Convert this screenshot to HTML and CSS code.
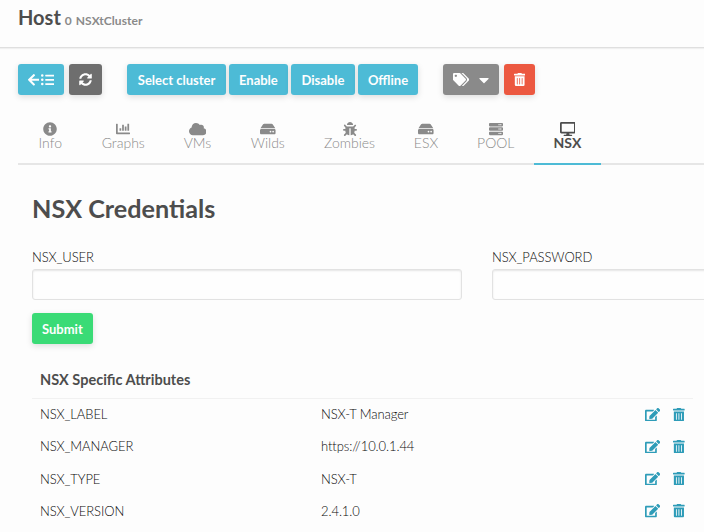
FILE: index.html
```html
<!DOCTYPE html>
<html lang="en">
<head>
<meta charset="utf-8">
<title>Host</title>
<link rel="stylesheet" href="styles.css">
</head>
<body>
<svg class="sprite" aria-hidden="true">
  <symbol id="arrow" viewBox="0 0 448 512"><path d="M257.5 445.1l-22.2 22.2c-9.4 9.4-24.6 9.4-33.9 0L7 273c-9.4-9.4-9.4-24.6 0-33.9L201.4 44.7c9.4-9.4 24.6-9.4 33.9 0l22.2 22.2c9.5 9.5 9.3 25-.4 34.3L136.6 216H424c13.3 0 24 10.7 24 24v32c0 13.3-10.7 24-24 24H136.6l120.5 114.8c9.8 9.3 10 24.8.4 34.3z"/></symbol>
  <symbol id="list" viewBox="0 0 512 512"><path d="M48 48a48 48 0 1 0 48 48 48 48 0 0 0-48-48zm0 160a48 48 0 1 0 48 48 48 48 0 0 0-48-48zm0 160a48 48 0 1 0 48 48 48 48 0 0 0-48-48zm448 16H176a16 16 0 0 0-16 16v32a16 16 0 0 0 16 16h320a16 16 0 0 0 16-16v-32a16 16 0 0 0-16-16zm0-320H176a16 16 0 0 0-16 16v32a16 16 0 0 0 16 16h320a16 16 0 0 0 16-16V80a16 16 0 0 0-16-16zm0 160H176a16 16 0 0 0-16 16v32a16 16 0 0 0 16 16h320a16 16 0 0 0 16-16v-32a16 16 0 0 0-16-16z"/></symbol>
  <symbol id="sync" viewBox="0 0 512 512"><path d="M370.72 133.28C339.458 104.008 298.888 87.962 255.848 88c-77.458.068-144.328 53.178-162.791 126.85-1.344 5.363-6.122 9.15-11.651 9.15H24.103c-7.498 0-13.194-6.807-11.807-14.176C33.933 94.924 134.813 8 256 8c66.448 0 126.791 26.136 171.315 68.685L463.03 40.97C478.149 25.851 504 36.559 504 57.941V192c0 13.255-10.745 24-24 24H345.941c-21.382 0-32.09-25.851-16.971-40.971l41.75-41.749zM32 296h134.059c21.382 0 32.09 25.851 16.971 40.971l-41.75 41.75c31.262 29.273 71.835 45.319 114.876 45.28 77.418-.07 144.315-53.144 162.787-126.849 1.344-5.363 6.122-9.15 11.651-9.15h57.304c7.498 0 13.194 6.807 11.807 14.176C478.067 417.076 377.187 504 256 504c-66.448 0-126.791-26.136-171.315-68.685L48.97 471.03C33.851 486.149 8 475.441 8 454.059V320c0-13.255 10.745-24 24-24z"/></symbol>
  <symbol id="tags" viewBox="0 0 640 512"><path d="M497.941 225.941L286.059 14.059A48 48 0 0 0 252.118 0H48C21.49 0 0 21.49 0 48v204.118a48 48 0 0 0 14.059 33.941l211.882 211.882c18.744 18.745 49.136 18.746 67.882 0l204.118-204.118c18.745-18.745 18.745-49.137 0-67.882zM112 160c-26.51 0-48-21.49-48-48s21.49-48 48-48 48 21.49 48 48-21.49 48-48 48zm513.941 133.823L421.823 497.941c-18.745 18.745-49.137 18.745-67.882 0l-.36-.36L527.64 323.522c16.999-16.999 26.362-39.6 26.362-63.64s-9.362-46.641-26.362-63.64L331.397 0h48.721a48 48 0 0 1 33.941 14.059l211.882 211.882c18.745 18.745 18.745 49.137 0 67.882z"/></symbol>
  <symbol id="trash" viewBox="0 0 448 512"><path d="M32 464a48 48 0 0 0 48 48h288a48 48 0 0 0 48-48V128H32zm272-256a16 16 0 0 1 32 0v224a16 16 0 0 1-32 0zm-96 0a16 16 0 0 1 32 0v224a16 16 0 0 1-32 0zm-96 0a16 16 0 0 1 32 0v224a16 16 0 0 1-32 0zM432 32H312l-9.4-18.7A24 24 0 0 0 281.1 0H166.8a23.72 23.72 0 0 0-21.4 13.3L136 32H16A16 16 0 0 0 0 48v32a16 16 0 0 0 16 16h416a16 16 0 0 0 16-16V48a16 16 0 0 0-16-16z"/></symbol>
  <symbol id="edit" viewBox="0 0 576 512"><path d="M402.6 83.2l90.2 90.2c3.8 3.8 3.8 10 0 13.8L274.4 405.6l-92.8 10.3c-12.4 1.4-22.9-9.1-21.5-21.5l10.3-92.8L388.8 83.2c3.8-3.8 10-3.8 13.8 0zm162-22.9l-48.8-48.8c-15.2-15.2-39.9-15.2-55.2 0l-35.4 35.4c-3.8 3.8-3.8 10 0 13.8l90.2 90.2c3.8 3.8 10 3.8 13.8 0l35.4-35.4c15.2-15.3 15.2-40 0-55.2zM384 346.2V448H64V128h229.8c3.2 0 6.2-1.3 8.5-3.5l40-40c7.6-7.6 2.2-20.5-8.5-20.5H48C21.5 64 0 85.5 0 112v352c0 26.5 21.5 48 48 48h352c26.5 0 48-21.5 48-48V306.2c0-10.7-12.9-16-20.5-8.5l-40 40c-2.2 2.3-3.5 5.3-3.5 8.5z"/></symbol>
  <symbol id="info" viewBox="0 0 512 512"><path d="M256 8C119.043 8 8 119.083 8 256c0 136.997 111.043 248 248 248s248-111.003 248-248C504 119.083 392.957 8 256 8zm0 110c23.196 0 42 18.804 42 42s-18.804 42-42 42-42-18.804-42-42 18.804-42 42-42zm56 254c0 6.627-5.373 12-12 12h-88c-6.627 0-12-5.373-12-12v-24c0-6.627 5.373-12 12-12h12v-64h-12c-6.627 0-12-5.373-12-12v-24c0-6.627 5.373-12 12-12h64c6.627 0 12 5.373 12 12v100h12c6.627 0 12 5.373 12 12v24z"/></symbol>
  <symbol id="chart" viewBox="0 0 512 512"><path d="M332.8 320h38.4c6.4 0 12.8-6.4 12.8-12.8V172.8c0-6.4-6.4-12.8-12.8-12.8h-38.4c-6.4 0-12.8 6.4-12.8 12.8v134.4c0 6.4 6.4 12.8 12.8 12.8zm96 0h38.4c6.4 0 12.8-6.4 12.8-12.8V76.8c0-6.4-6.4-12.8-12.8-12.8h-38.4c-6.4 0-12.8 6.4-12.8 12.8v230.4c0 6.4 6.4 12.8 12.8 12.8zm-288 0h38.4c6.4 0 12.8-6.4 12.8-12.8v-70.4c0-6.4-6.4-12.8-12.8-12.8h-38.4c-6.4 0-12.8 6.4-12.8 12.8v70.4c0 6.4 6.4 12.8 12.8 12.8zm96 0h38.4c6.4 0 12.8-6.4 12.8-12.8V108.8c0-6.4-6.4-12.8-12.8-12.8h-38.4c-6.4 0-12.8 6.4-12.8 12.8v198.4c0 6.4 6.4 12.8 12.8 12.8zM496 384H64V80c0-8.84-7.16-16-16-16H16C7.16 64 0 71.16 0 80v336c0 17.67 14.33 32 32 32h464c8.84 0 16-7.16 16-16v-32c0-8.84-7.16-16-16-16z"/></symbol>
  <symbol id="cloud" viewBox="0 0 640 512"><path d="M537.6 226.6c4.1-10.7 6.4-22.4 6.4-34.6 0-53-43-96-96-96-19.7 0-38.1 6-53.3 16.2C367 64.2 315.3 32 256 32c-88.4 0-160 71.6-160 160 0 2.7.1 5.4.2 8.1C40.2 219.8 0 273.2 0 336c0 79.5 64.5 144 144 144h368c70.7 0 128-57.3 128-128 0-61.9-44-113.6-102.4-125.4z"/></symbol>
  <symbol id="hdd" viewBox="0 0 576 512"><path d="M576 304v96c0 26.51-21.49 48-48 48H48c-26.51 0-48-21.49-48-48v-96c0-26.51 21.49-48 48-48h480c26.51 0 48 21.49 48 48zm-48-80a79.557 79.557 0 0 1 30.777 6.165L462.25 85.374A48.003 48.003 0 0 0 422.311 64H153.689a48 48 0 0 0-39.938 21.374L17.223 230.165A79.557 79.557 0 0 1 48 224h480zm-48 96c-17.673 0-32 14.327-32 32s14.327 32 32 32 32-14.327 32-32-14.327-32-32-32zm-96 0c-17.673 0-32 14.327-32 32s14.327 32 32 32 32-14.327 32-32-14.327-32-32-32z"/></symbol>
  <symbol id="bug" viewBox="0 0 512 512"><path d="M511.988 288.9c-.478 17.43-15.217 31.1-32.653 31.1H424v16c0 21.864-4.882 42.584-13.6 61.145l60.228 60.228c12.496 12.497 12.496 32.758 0 45.255-12.498 12.497-32.759 12.496-45.256 0l-54.736-54.736C345.886 467.965 314.351 480 280 480V236c0-6.627-5.373-12-12-12h-24c-6.627 0-12 5.373-12 12v244c-34.351 0-65.886-12.035-90.636-32.108l-54.736 54.736c-12.498 12.497-32.759 12.496-45.256 0-12.496-12.497-12.496-32.758 0-45.255l60.228-60.228C92.882 378.584 88 357.864 88 336v-16H32.666C15.23 320 .491 306.33.013 288.9-.484 270.816 13.998 256 31.999 256H88v-58.745l-46.628-46.628c-12.496-12.497-12.496-32.758 0-45.255 12.498-12.497 32.758-12.497 45.256 0L141.255 160h229.489l54.627-54.627c12.498-12.497 32.758-12.497 45.256 0 12.496 12.497 12.496 32.758 0 45.255L424 197.255V256h56.001c18.001 0 32.483 14.816 31.987 32.9zM257 0c-61.856 0-112 50.144-112 112h224C369 50.144 318.856 0 257 0z"/></symbol>
  <symbol id="server" viewBox="0 0 512 512"><path id="unit" d="M480 160H32c-17.673 0-32-14.327-32-32V64c0-17.673 14.327-32 32-32h448c17.673 0 32 14.327 32 32v64c0 17.673-14.327 32-32 32zm-48-88c-13.255 0-24 10.745-24 24s10.745 24 24 24 24-10.745 24-24-10.745-24-24-24zm-64 0c-13.255 0-24 10.745-24 24s10.745 24 24 24 24-10.745 24-24-10.745-24-24-24z"/><use href="#unit" y="160"/><use href="#unit" y="320"/></symbol>
  <symbol id="desktop" viewBox="0 0 576 512"><path d="M528 0H48C21.5 0 0 21.5 0 48v320c0 26.5 21.5 48 48 48h192l-16 48h-72c-13.3 0-24 10.7-24 24s10.7 24 24 24h272c13.3 0 24-10.7 24-24s-10.7-24-24-24h-72l-16-48h192c26.5 0 48-21.5 48-48V48c0-26.5-21.5-48-48-48zm-16 352H64V64h448v288z"/></symbol>
  <symbol id="caret" viewBox="0 0 320 512"><path d="M31.3 192h257.3c17.8 0 26.7 21.5 14.1 34.1L174.1 354.8c-7.8 7.8-20.5 7.8-28.3 0L17.2 226.1C4.6 213.5 13.5 192 31.3 192z"/></symbol>
</svg>

<header class="page-head">
  <h1 class="page-title">Host</h1>
  <span class="page-sub">0</span>
  <span class="page-sub page-name">NSXtCluster</span>
</header>

<div class="toolbar">
  <div class="group group-icons">
    <button class="btn btn-back"><svg class="icon w-arrow"><use href="#arrow"/></svg><svg class="icon w-square"><use href="#list"/></svg></button>
    <button class="btn btn-dark"><svg class="icon w-square"><use href="#sync"/></svg></button>
  </div>
  <div class="group group-text">
    <button class="btn">Select cluster</button>
    <button class="btn">Enable</button>
    <button class="btn">Disable</button>
    <button class="btn">Offline</button>
  </div>
  <div class="group group-icons">
    <button class="btn btn-grey"><svg class="icon w-cloud"><use href="#tags"/></svg><svg class="icon w-caret"><use href="#caret"/></svg></button>
    <button class="btn btn-red"><svg class="icon w-arrow"><use href="#trash"/></svg></button>
  </div>
</div>

<nav class="tabs">
  <a class="tab"><svg class="icon w-square"><use href="#info"/></svg>Info</a>
  <a class="tab"><svg class="icon w-square"><use href="#chart"/></svg>Graphs</a>
  <a class="tab"><svg class="icon w-cloud"><use href="#cloud"/></svg>VMs</a>
  <a class="tab"><svg class="icon w-wide"><use href="#hdd"/></svg>Wilds</a>
  <a class="tab"><svg class="icon w-square"><use href="#bug"/></svg>Zombies</a>
  <a class="tab"><svg class="icon w-wide"><use href="#hdd"/></svg>ESX</a>
  <a class="tab"><svg class="icon w-square"><use href="#server"/></svg>POOL</a>
  <a class="tab active"><svg class="icon w-wide"><use href="#desktop"/></svg>NSX</a>
</nav>

<main class="panel">
  <h2 class="section-title">NSX Credentials</h2>
  <form class="form">
    <div class="fields">
      <label class="field">NSX_USER<input class="input" type="text"></label>
      <label class="field">NSX_PASSWORD<input class="input" type="password"></label>
    </div>
    <button class="btn btn-green" type="button">Submit</button>
  </form>

  <table class="attrs">
    <colgroup><col class="col-key"><col class="col-value"><col></colgroup>
    <thead><tr><th colspan="3">NSX Specific Attributes</th></tr></thead>
    <tbody>
      <tr><td>NSX_LABEL</td><td>NSX-T Manager</td><td><div class="action-row"><svg class="icon w-wide"><use href="#edit"/></svg><svg class="icon w-arrow"><use href="#trash"/></svg></div></td></tr>
      <tr><td>NSX_MANAGER</td><td>https://10.0.1.44</td><td><div class="action-row"><svg class="icon w-wide"><use href="#edit"/></svg><svg class="icon w-arrow"><use href="#trash"/></svg></div></td></tr>
      <tr><td>NSX_TYPE</td><td>NSX-T</td><td><div class="action-row"><svg class="icon w-wide"><use href="#edit"/></svg><svg class="icon w-arrow"><use href="#trash"/></svg></div></td></tr>
      <tr><td>NSX_VERSION</td><td>2.4.1.0</td><td><div class="action-row"><svg class="icon w-wide"><use href="#edit"/></svg><svg class="icon w-arrow"><use href="#trash"/></svg></div></td></tr>
    </tbody>
  </table>
</main>
</body>
</html>
```
FILE: styles.css
```css
* { box-sizing: border-box; }

body {
  margin: 0;
  height: 532px;
  overflow: hidden;
  background: #fdfdfd;
  color: #0a0a0a;
  font: 300 13px/20px Lato, sans-serif;
}

.sprite { display: none; }

.icon { height: 1em; fill: currentColor; flex: none; }
.w-arrow { width: .875em; }
.w-square { width: 1em; }
.w-wide { width: 1.125em; }
.w-cloud { width: 1.25em; }

.page-head {
  display: flex;
  align-items: baseline;
  height: 48px;
  padding: 3px 18px 0;
  border-bottom: 1px solid #dfdfdf;
  box-shadow: 0 1px 1px #f0f0f0;
}
.page-title { margin: 0 4px 0 0; font-size: 20px; line-height: 28px; font-weight: 700; color: #4d4d4d; }
.page-sub { font-size: 12px; font-weight: 700; color: #8a8a8a; }
.page-name { margin-left: 4px; letter-spacing: .05px; }

.toolbar { display: flex; gap: 24.5px; padding: 16px 18px 0; }
.group { display: flex; gap: 5px; }
.group-text { gap: 3px; margin-left: 1px; }

.btn {
  display: inline-flex;
  align-items: center;
  justify-content: center;
  gap: 9.5px;
  height: 31px;
  padding: 0 10px;
  border: 0;
  border-radius: 3px;
  background: #4dbbd6;
  color: #fefefe;
  font: 700 13px/14px Lato, sans-serif;
  box-shadow: 0 2px 6px rgba(0, 0, 0, .13);
}
.group-text .btn { padding: 0 10.3px; }
.btn-back { gap: 1.5px; padding: 0 9.5px; font-size: 13.6px; }
.btn-dark { background: #6e6e6e; }
.btn-grey { background: #8a8a8a; }
.w-caret { width: 10px; height: 16px; }
.btn-red { background: #ec5840; }
.btn-green { background: #3adb76; }

.tabs {
  display: grid;
  grid-template-columns: 64.5px 81.5px 67px 73.5px 90px 63px 76.5px 67px;
  height: 50px;
  margin: 20px 0 0 18px;
  border-bottom: 2px solid #e6e6e6;
}
.tab {
  display: flex;
  flex-direction: column;
  align-items: center;
  height: 50px;
  padding-top: 7px;
  color: #8a8a8a;
  font-size: 14px;
  line-height: 14px;
}
.tab.active { color: #4d4d4d; font-weight: 700; border-bottom: 2px solid #4dbbd6; }

.panel { padding: 26px 12px 0 32px; }
.section-title { margin: 0; font-size: 25.2px; line-height: 34px; font-weight: 700; color: #4d4d4d; }

.form { margin-top: 21px; }
.fields { display: grid; grid-template-columns: 430px 430px; gap: 30px; }
.field { display: block; line-height: 22px; letter-spacing: -.08px; }
.input {
  display: block;
  width: 100%;
  height: 31px;
  margin: 1px 0 0;
  padding: 0 8px;
  border: 1px solid #e2e2e2;
  border-radius: 3px;
  background: #fefefe;
  box-shadow: inset 0 1px 2px rgba(10, 10, 10, .1);
}
.form .btn { margin-top: 13px; }

.attrs { width: 660.5px; margin-top: 18px; border-collapse: collapse; table-layout: fixed; letter-spacing: -.08px; }
.col-key { width: 281px; }
.col-value { width: 281px; }
.attrs th { height: 36px; padding: 0 8px; border-bottom: 1px solid #f1f1f1; text-align: left; font-size: 14.5px; font-weight: 700; letter-spacing: 0; color: #4d4d4d; }
.attrs td { height: 32.3px; padding: 0 8px; }
.action-row { display: flex; justify-content: flex-end; gap: 12.5px; color: #2e9cb8; font-size: 13.5px; }
```
